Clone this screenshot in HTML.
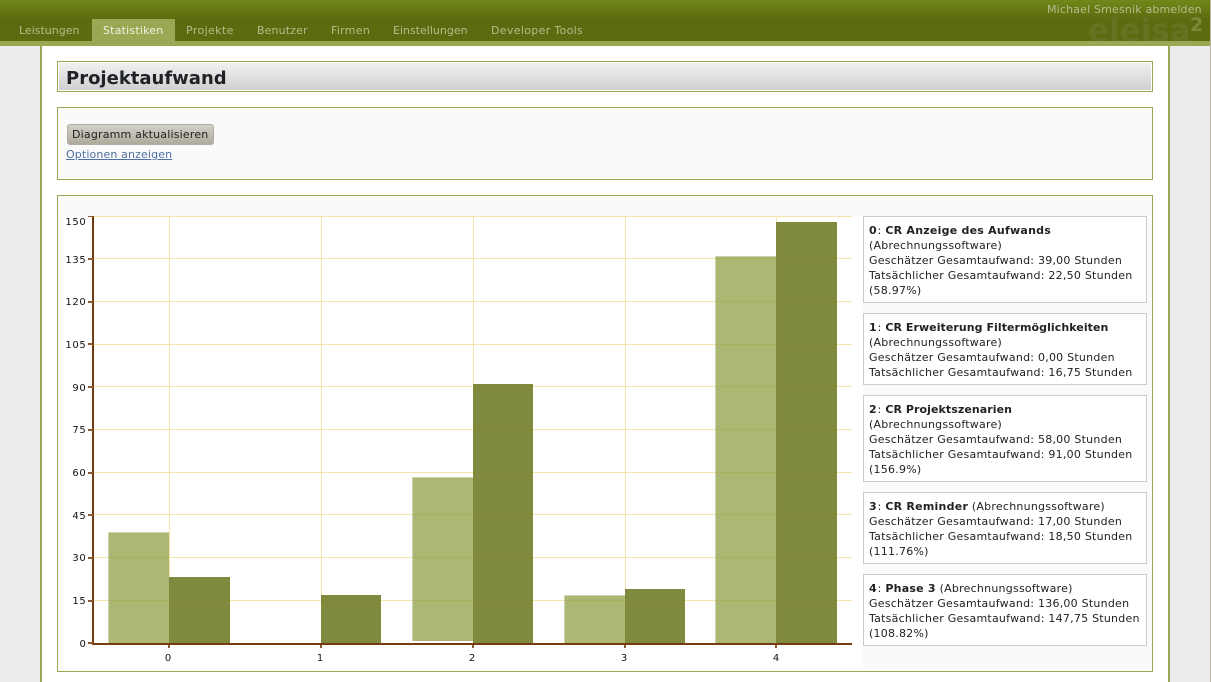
<!DOCTYPE html>
<html><head><meta charset="utf-8"><style>
html,body{margin:0;padding:0;width:1211px;height:682px;overflow:hidden;background:#ececec}
body{position:relative;font-family:"DejaVu Sans",sans-serif;font-size:11px;color:#222}
.a{position:absolute;white-space:nowrap}
#hd{left:0;top:0;width:1211px;height:41px;background:linear-gradient(#728819 0,#5c6b10 19px,#5c6b10 100%);overflow:hidden}
#bar{left:0;top:41px;width:1211px;height:5px;background:#9aa854}
#main{left:40px;top:46px;width:1126px;height:636px;background:#fff;border-left:2px solid #9aa854;border-right:2px solid #9aa854}
.n{top:24px;line-height:13px;color:#b3bd8a}
.box{position:absolute;box-sizing:border-box;border:1px solid #9aa854;background:#fafafa}
.lg{position:absolute;box-sizing:border-box;left:863px;width:284px;border:1px solid #ccc;background:#fff;padding:6px 0 0 5px;line-height:15px;color:#222;white-space:nowrap;letter-spacing:.24px}
.lg b:first-child{letter-spacing:1px}
</style></head><body>
<div class="a" id="hd">
<div class="a" style="left:1088px;top:11px;font-size:31px;line-height:40px;font-weight:bold;color:#647322">eleisa</div>
<div class="a" style="left:1190px;top:14px;font-size:19px;line-height:22px;font-weight:bold;color:#7a8838">2</div>
<div class="a" style="left:1047px;top:3px;line-height:14px;color:#b3bd8a;letter-spacing:.17px">Michael Smesnik abmelden</div>
</div>
<div class="a" style="left:92px;top:19px;width:83px;height:22px;background:#9aa854"></div>
<div class="a n" style="left:19px">Leistungen</div>
<div class="a n" style="left:103px;color:#f0f2e0;letter-spacing:.2px">Statistiken</div>
<div class="a n" style="left:186px;letter-spacing:.38px">Projekte</div>
<div class="a n" style="left:257px;letter-spacing:.12px">Benutzer</div>
<div class="a n" style="left:331px;letter-spacing:.3px">Firmen</div>
<div class="a n" style="left:393px">Einstellungen</div>
<div class="a n" style="left:491px;letter-spacing:.33px">Developer Tools</div>
<div class="a" id="bar"></div>
<div class="a" id="main"></div>
<div class="a" style="left:1210px;top:0;width:1px;height:682px;background:#bcb3a4"></div>

<div class="box" style="left:57px;top:61px;width:1096px;height:31px;background:#fff;padding:1px">
<div style="height:27px;background:linear-gradient(#f1f1f1,#d0d0d0)"></div></div>
<div class="a" style="left:66px;top:67px;font-size:18px;line-height:23px;font-weight:bold;color:#1f2226">Projektaufwand</div>

<div class="box" style="left:57px;top:107px;width:1096px;height:73px"></div>
<div class="a" style="left:67px;top:124px;width:147px;height:21px;box-sizing:border-box;border:1px solid #b0ada2;border-radius:3px;background:linear-gradient(#d3d0c8,#aeaa9d);line-height:19px;padding-left:4px;color:#222;letter-spacing:.19px">Diagramm aktualisieren</div>
<div class="a" style="left:66px;top:148px;line-height:14px;color:#4f6fa5;text-decoration:underline;letter-spacing:.13px">Optionen anzeigen</div>

<div class="box" style="left:57px;top:195px;width:1096px;height:477px"></div>
<svg class="a" style="left:0;top:0" width="1211" height="682" font-family="DejaVu Sans, sans-serif" font-size="10" fill="#111">
<rect x="63" y="216" width="800" height="451" fill="#fff"/>
<g stroke="#f5e3ab" stroke-width="1" fill="none">
<path d="M93 216.500H852M93 258.500H852M93 301.500H852M93 344.500H852M93 386.500H852M93 429.500H852M93 472.500H852M93 514.500H852M93 557.500H852M93 600.500H852"/>
<path d="M169.500 216V643M321.500 216V643M473.500 216V643M625.500 216V643M776.500 216V643"/>
</g>
<g fill="#8d9b3f" fill-opacity=".72">
<rect x="108" y="532" width="61" height="111"/>
<rect x="412" y="477" width="61" height="164"/>
<rect x="564" y="595" width="61" height="48"/>
<rect x="715" y="256" width="61" height="387"/>
</g>
<g fill="none" stroke="#fff" stroke-opacity=".4">
<path d="M108.500 643V532.500H169"/>
<path d="M412.500 641V477.500H473"/>
<path d="M564.500 643V595.500H625"/>
<path d="M715.500 643V256.500H776"/>
</g>
<g fill="#717d2a" fill-opacity=".9">
<rect x="169" y="577" width="61" height="66"/>
<rect x="321" y="595" width="60" height="48"/>
<rect x="473" y="384" width="60" height="259"/>
<rect x="625" y="589" width="60" height="54"/>
<rect x="776" y="222" width="61" height="421"/>
</g>
<rect x="92" y="216" width="2" height="429" fill="#763c10"/>
<rect x="93" y="643" width="759" height="2" fill="#763c10"/>
<g fill="#8a5a35">
<rect x="88" y="216" width="5" height="1"/>
<rect x="88" y="258" width="5" height="2"/>
<rect x="88" y="301" width="5" height="2"/>
<rect x="88" y="343" width="5" height="2"/>
<rect x="88" y="386" width="5" height="2"/>
<rect x="88" y="429" width="5" height="2"/>
<rect x="88" y="472" width="5" height="2"/>
<rect x="88" y="514" width="5" height="2"/>
<rect x="88" y="557" width="5" height="2"/>
<rect x="88" y="600" width="5" height="2"/>
<rect x="88" y="642" width="5" height="2"/>
<rect x="168" y="645" width="2" height="3"/>
<rect x="320" y="645" width="2" height="3"/>
<rect x="472" y="645" width="2" height="3"/>
<rect x="624" y="645" width="2" height="3"/>
<rect x="775" y="645" width="2" height="3"/>
</g>
<g text-anchor="end" letter-spacing=".7">
<text x="86.500" y="225">150</text><text x="86.500" y="263">135</text><text x="86.500" y="305">120</text>
<text x="86.500" y="348">105</text><text x="86.500" y="391">90</text><text x="86.500" y="433">75</text>
<text x="86.500" y="476">60</text><text x="86.500" y="519">45</text><text x="86.500" y="561">30</text>
<text x="86.500" y="604">15</text><text x="86.500" y="647">0</text>
</g>
<g text-anchor="middle">
<text x="168" y="661">0</text><text x="320" y="661">1</text><text x="472" y="661">2</text>
<text x="624" y="661">3</text><text x="776" y="661">4</text>
</g>
</svg>

<div class="lg" style="top:216px;height:87px"><b>0</b>: <b>CR Anzeige des Aufwands</b><br>(Abrechnungssoftware)<br>Geschätzer Gesamtaufwand: 39,00 Stunden<br>Tatsächlicher Gesamtaufwand: 22,50 Stunden<br>(58.97%)</div>
<div class="lg" style="top:313px;height:72px"><b>1</b>: <b style="letter-spacing:.06px">CR Erweiterung Filtermöglichkeiten</b><br>(Abrechnungssoftware)<br>Geschätzer Gesamtaufwand: 0,00 Stunden<br>Tatsächlicher Gesamtaufwand: 16,75 Stunden</div>
<div class="lg" style="top:395px;height:87px"><b>2</b>: <b style="letter-spacing:.07px">CR Projektszenarien</b><br>(Abrechnungssoftware)<br>Geschätzer Gesamtaufwand: 58,00 Stunden<br>Tatsächlicher Gesamtaufwand: 91,00 Stunden<br>(156.9%)</div>
<div class="lg" style="top:492px;height:72px"><b>3</b>: <b>CR Reminder</b> (Abrechnungssoftware)<br>Geschätzer Gesamtaufwand: 17,00 Stunden<br>Tatsächlicher Gesamtaufwand: 18,50 Stunden<br>(111.76%)</div>
<div class="lg" style="top:574px;height:72px"><b>4</b>: <b>Phase 3</b> (Abrechnungssoftware)<br>Geschätzer Gesamtaufwand: 136,00 Stunden<br>Tatsächlicher Gesamtaufwand: 147,75 Stunden<br>(108.82%)</div>
</body></html>
